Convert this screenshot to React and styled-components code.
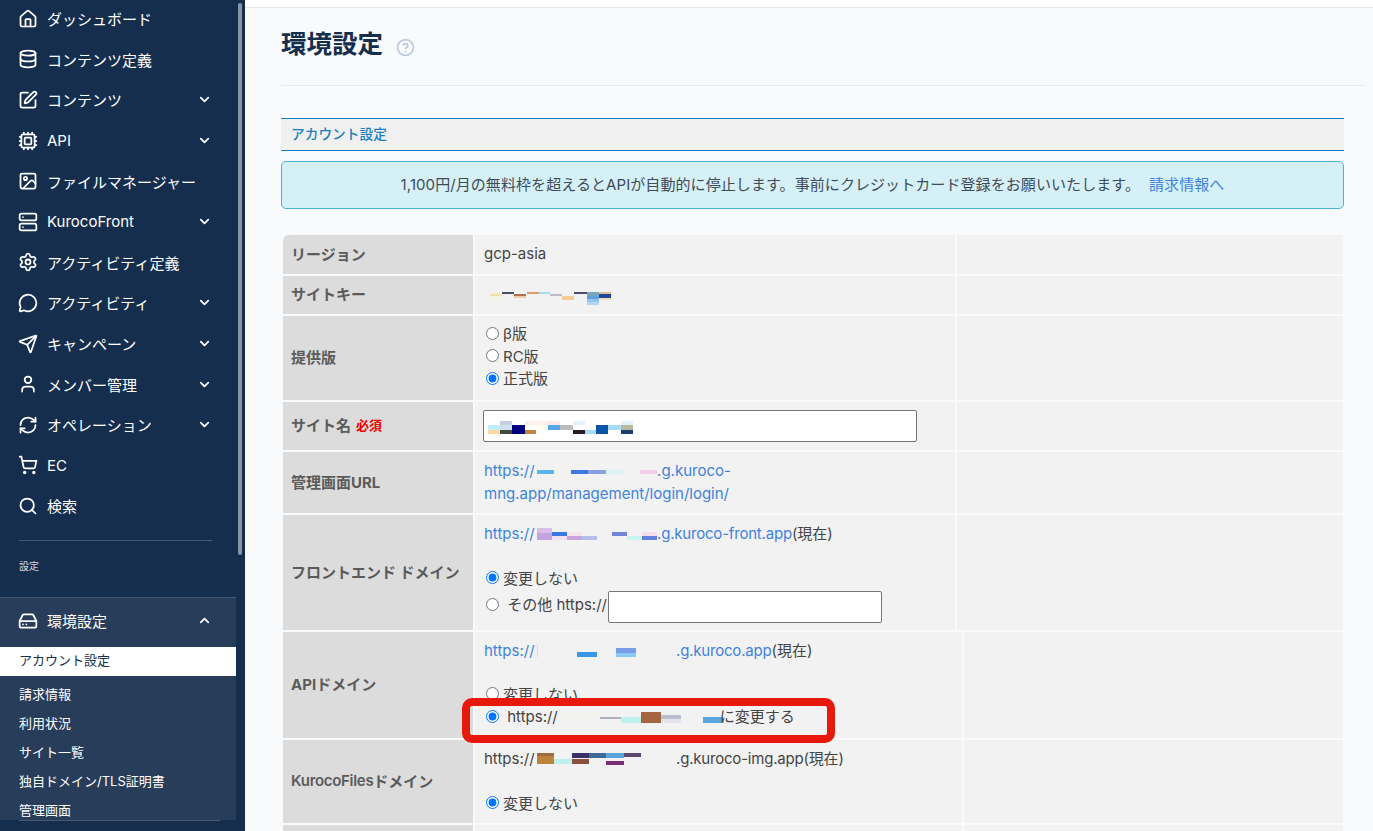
import React from 'react';
import styled, { createGlobalStyle } from 'styled-components';
import {
  House,
  Database,
  SquarePen,
  Cpu,
  Image,
  Server,
  Settings,
  MessageCircle,
  Send,
  User,
  RefreshCw,
  ShoppingCart,
  Search,
  HardDrive,
  ChevronDown,
  ChevronUp,
  CircleHelp,
} from 'lucide-react';

const GlobalStyle = createGlobalStyle`
  html, body {
    margin: 0;
    height: 100%;
    overflow: hidden;
    font-family: Inter, "Noto Sans CJK JP", sans-serif;
    background: #f9fafc;
  }
  * { box-sizing: border-box; }
`;

const Page = styled.div`
  display: flex;
  width: 100%;
  height: 100vh;
  overflow: hidden;
`;

/* sidebar */
const Sidebar = styled.aside`
  position: relative;
  flex: 0 0 245px;
  height: 100%;
  background: #152e4d;
  color: #fff;
  overflow: hidden;
`;

const Scrollbar = styled.div`
  position: absolute;
  top: 3px;
  left: 238px;
  width: 4px;
  height: 552px;
  border-radius: 2px;
  background: #8794a6;
`;

const NavArea = styled.div`
  width: 236px;
  height: 598.5px;
  margin-top: -1.5px;
`;

const NavItem = styled.div`
  display: flex;
  align-items: center;
  height: 40.6px;
  padding: 0 24px 0 18px;
  font-size: 15px;
  gap: 9px;

  & > svg:first-child {
    flex: 0 0 20px;
  }
`;

const NavLabel = styled.span`
  flex: 1;
  white-space: nowrap;
`;

const Divider = styled.div`
  height: 1px;
  margin: 13.5px 24px 0 19px;
  background: #44586f;
`;

const SectionLabel = styled.div`
  margin: 18px 0 0 19px;
  font-size: 10px;
  line-height: 14px;
  color: #d5dae1;
`;

const SubPanel = styled.div`
  width: 236px;
  height: 223px;
  border-top: 1px solid #44586f;
  background: #283d5a;
  overflow: hidden;
`;

const SubHeader = styled(NavItem)`
  height: 49px;
  padding-bottom: 4px;
`;

const SubItem = styled.div`
  height: 29px;
  padding-left: 19px;
  font-size: 13px;
  line-height: 26px;
  white-space: nowrap;
  color: ${({ $active }) => ($active ? '#152e4d' : '#fff')};
  background: ${({ $active }) => ($active ? '#fff' : 'transparent')};
  margin-bottom: ${({ $active }) => ($active ? '5px' : '0')};
`;

const BottomLine = styled.div`
  height: 1px;
  margin: 0 25px 0 19px;
  background: #44586f;
`;

/* main */
const Main = styled.main`
  flex: 1;
  height: 100%;
  min-width: 0;
  overflow: hidden;
`;

const TopStrip = styled.div`
  height: 8px;
  background: #fff;
  border-bottom: 1px solid #e3e8ef;
`;

const Content = styled.div`
  padding: 0 29px 0 36px;
`;

const TitleBar = styled.div`
  display: flex;
  align-items: center;
  gap: 13px;
  height: 78px;
  margin-right: -22px;
  padding-bottom: 5px;
  border-bottom: 1px solid #e7ebf2;
`;

const Title = styled.h1`
  margin: 0 0 5px;
  font-size: 25.5px;
  font-weight: 700;
  color: #152e4d;
`;

const HelpIcon = styled(CircleHelp)`
  margin-top: 7px;
`;

const SectionTitle = styled.h2`
  margin: 32px 0 0;
  height: 33px;
  padding-left: 10px;
  border-top: 1px solid #0e7fc4;
  border-bottom: 1px solid #0e7fc4;
  background: #f0f0f0;
  font-size: 13.7px;
  font-weight: 500;
  line-height: 31px;
  color: #1a7fbe;
`;

const Notice = styled.div`
  display: flex;
  align-items: center;
  justify-content: center;
  gap: 9px;
  height: 48px;
  margin-top: 10px;
  padding-bottom: 3px;
  border: 1px solid #4cb0d5;
  border-radius: 5px;
  background: #d6f0f7;
  font-size: 15px;
  letter-spacing: 0.08px;
  color: #3f4b57;
`;

const Link = styled.a`
  color: #3f82dd;
  text-decoration: none;
`;

const FormTable = styled.div`
  display: flex;
  flex-direction: column;
  gap: 2px;
  margin: 26px 1px 0 2px;
`;

const Row = styled.div`
  position: relative;
  display: grid;
  grid-template-columns: 190px ${({ $wide }) => ($wide ? '487px' : '480px')} 1fr;
  gap: 2px;
  height: ${({ $height }) => $height}px;
`;

const Head = styled.div`
  display: flex;
  align-items: center;
  padding: 0 0 3px 8px;
  background: #dcdcdc;
  font-size: 15px;
  font-weight: 700;
  color: #5b5b5b;
  white-space: nowrap;

  ${Row}:first-child & {
    border-top-left-radius: 6px;
  }
`;

const HeadLatin = styled.span`
  font-weight: 600;
  letter-spacing: -0.3px;
`;

const Required = styled.span`
  margin-left: 5px;
  font-size: 13px;
  color: #ee0000;
`;

const Cell = styled.div`
  padding: ${({ $center }) => ($center ? '0 9px' : '8px 9px 0')};
  display: ${({ $center }) => ($center ? 'flex' : 'block')};
  align-items: center;
  background: #f2f2f2;
  font-size: 15px;
  line-height: 22.5px;
  color: #444;
  overflow: hidden;
`;

const Line = styled.div`
  display: flex;
  align-items: center;
  height: ${({ $height = 22.5 }) => $height}px;
  white-space: nowrap;
  margin-top: ${({ $gap = 0 }) => $gap}px;
`;

const Radio = styled.input.attrs({ type: 'radio', readOnly: true })`
  flex: 0 0 13px;
  width: 13px;
  height: 13px;
  margin: 0 4px 2px 2px;
`;

const TextInput = styled.input.attrs({ type: 'text', readOnly: true })`
  display: block;
  flex: none;
  width: ${({ $width }) => $width}px;
  height: 32px;
  padding: 0;
  margin-top: ${({ $drop = 0 }) => $drop}px;
  margin-left: ${({ $drop = 0 }) => ($drop ? 1 : 0)}px;
  border: 1px solid #767676;
  border-radius: 2px;
  background: #fff;
`;

const InputSlot = styled.div`
  position: relative;
  margin-left: -1px;
`;

const InputMask = styled.svg`
  position: absolute;
  left: 5px;
  top: 11px;
`;

const Mask = styled.svg`
  display: inline-block;
  flex: none;
  vertical-align: middle;
`;

const KeyMask = styled(Mask)`
  margin: 3px 0 0 6px;
`;

const HostMask = styled(Mask)`
  margin-left: 2.5px;
`;

const NextMask = styled(Mask)`
  margin-right: -3px;
`;

const HostLink = styled(Link)`
  letter-spacing: -0.2px;
`;

const HostText = styled.span`
  letter-spacing: -0.2px;
`;

const RedFrame = styled.div`
  position: absolute;
  z-index: 1;
  left: 179px;
  top: 66px;
  width: 373px;
  height: 45px;
  border: 8px solid #e8180c;
  border-radius: 10px;
  pointer-events: none;
`;

/* pixelated parts of the picture that were blurred out */
const Pixels = ({ w, h, cells, as: Comp = Mask }) => (
  <Comp width={w} height={h} viewBox={`0 0 ${w} ${h}`}>
    {cells.map(([x, y, cw, ch, fill], i) => (
      <rect key={i} x={x} y={y} width={cw} height={ch} fill={fill} />
    ))}
  </Comp>
);

const siteKey = [
  [0, 3, 12, 2, '#f9f1dc'], [0, 5, 12, 2, '#f3deb0'], [0, 8, 12, 3, '#f5f0e0'],
  [12, 3, 12, 2, '#4a4d66'], [24, 5, 12, 2, '#b5704a'], [24, 7, 12, 2, '#f0cfa8'],
  [37, 3, 12, 2, '#dd9e6e'], [49, 3, 11, 2, '#a6dcf2'], [49, 5, 11, 2, '#f3f3ee'],
  [60, 5, 12, 2, '#b8bccb'], [72, 7, 12, 4, '#f3cd95'], [84, 3, 13, 2, '#4a4d66'],
  [97, 3, 12, 4, '#79a6bf'], [97, 7, 12, 3, '#5da0dc'], [97, 10, 12, 3, '#92c4ee'],
  [97, 13, 12, 3, '#b3d5f2'], [109, 3, 12, 2, '#dfbd93'], [109, 5, 12, 4, '#1d4a96'],
  [109, 9, 12, 2, '#f3dcc0'],
];

const siteName = [
  [0, 4, 12, 5, '#bfeefe'], [0, 9, 12, 4, '#fdd9a0'],
  [12, 0, 12, 4, '#c5cfdf'], [12, 4, 12, 5, '#cfe2ee'], [12, 9, 12, 4, '#434a3c'],
  [24, 4, 13, 9, '#00007f'],
  [37, 0, 11, 4, '#fdf0ec'], [37, 9, 11, 4, '#c2843c'],
  [48, 0, 12, 4, '#fdf0ec'], [48, 4, 12, 5, '#fffff0'],
  [60, 0, 12, 4, '#fbeaea'], [60, 4, 12, 5, '#55a8ea'],
  [72, 4, 13, 5, '#bdbdbd'],
  [85, 0, 12, 4, '#e6f3ff'], [85, 9, 12, 4, '#2a1a25'],
  [97, 9, 11, 4, '#a4def6'],
  [108, 4, 12, 9, '#0a55a8'],
  [120, 4, 13, 5, '#a4dcfa'],
  [133, 0, 12, 4, '#e6f3fb'], [133, 4, 12, 5, '#b8b8a0'], [133, 9, 12, 4, '#1a3f70'],
];

const adminHost = [
  [0, 0, 17, 4, '#5ab5ec'], [34, 0, 17, 4, '#3d78e0'], [51, 0, 18, 4, '#8aa0e6'],
  [69, 0, 17, 4, '#daf3f3'], [103, 0, 17, 4, '#f5cde6'],
];

const frontHost = [
  [0, 0, 15, 5, '#d9bfe8'], [0, 5, 15, 7, '#c4a4e0'],
  [15, 4, 15, 4, '#3d78e0'], [15, 8, 15, 4, '#f0e0f0'],
  [30, 4, 15, 4, '#f5e6ea'], [30, 8, 15, 4, '#c8a4de'],
  [45, 8, 15, 4, '#b8bce8'], [75, 4, 15, 4, '#7084dc'],
  [90, 8, 15, 4, '#c8f4f2'], [105, 4, 15, 4, '#f5dce8'], [105, 8, 15, 4, '#6480dc'],
];

const apiHost = [
  [0, 0, 1, 12, '#d8d4f2'], [40, 7, 20, 5, '#3a96e6'],
  [79, 3, 20, 5, '#7a9fe8'], [79, 8, 20, 4, '#8ac8f5'],
];

const apiNext = [
  [2, 1, 40, 3, '#f5f2ee'], [42, 5, 21, 2, '#b0b0b8'], [63, 5, 20, 6, '#bef0ee'],
  [83, 0, 20, 11, '#a5653f'], [103, 3, 20, 4, '#b9bfcf'], [103, 7, 20, 4, '#e5e4ee'],
  [145, 5, 20, 6, '#5aa5dc'],
];

const filesHost = [
  [0, 0, 17, 3, '#a06a40'], [0, 3, 17, 8, '#bd833c'], [17, 6, 18, 5, '#bef0ee'],
  [35, 0, 17, 5, '#3a2f66'], [35, 6, 17, 5, '#8a4f40'], [52, 0, 17, 5, '#3d6a94'],
  [69, 0, 18, 5, '#5aa5dc'], [69, 8, 18, 4, '#7a2f78'], [87, 0, 17, 4, '#5a4a70'],
];

const navItems = [
  { icon: House, label: 'ダッシュボード' },
  { icon: Database, label: 'コンテンツ定義' },
  { icon: SquarePen, label: 'コンテンツ', more: true },
  { icon: Cpu, label: 'API', more: true },
  { icon: Image, label: 'ファイルマネージャー' },
  { icon: Server, label: 'KurocoFront', more: true },
  { icon: Settings, label: 'アクティビティ定義' },
  { icon: MessageCircle, label: 'アクティビティ', more: true },
  { icon: Send, label: 'キャンペーン', more: true },
  { icon: User, label: 'メンバー管理', more: true },
  { icon: RefreshCw, label: 'オペレーション', more: true },
  { icon: ShoppingCart, label: 'EC' },
  { icon: Search, label: '検索' },
];

const subItems = ['アカウント設定', '請求情報', '利用状況', 'サイト一覧', '独自ドメイン/TLS証明書', '管理画面'];

const App = () => (
  <Page>
    <GlobalStyle />
    <Sidebar>
      <Scrollbar />
      <NavArea>
        {navItems.map(({ icon: Icon, label, more }) => (
          <NavItem key={label}>
            <Icon size={20} strokeWidth={2.1} />
            <NavLabel>{label}</NavLabel>
            {more && <ChevronDown size={15} strokeWidth={2.8} />}
          </NavItem>
        ))}
        <Divider />
        <SectionLabel>設定</SectionLabel>
      </NavArea>
      <SubPanel>
        <SubHeader>
          <HardDrive size={20} strokeWidth={2.1} />
          <NavLabel>環境設定</NavLabel>
          <ChevronUp size={15} strokeWidth={2.8} />
        </SubHeader>
        {subItems.map((label, i) => (
          <SubItem key={label} $active={i === 0}>{label}</SubItem>
        ))}
      </SubPanel>
      <BottomLine />
    </Sidebar>

    <Main>
      <TopStrip />
      <Content>
        <TitleBar>
          <Title>環境設定</Title>
          <HelpIcon size={19} color="#bcc9de" strokeWidth={2.2} />
        </TitleBar>
        <SectionTitle>アカウント設定</SectionTitle>
        <Notice>
          1,100円/月の無料枠を超えるとAPIが自動的に停止します。事前にクレジットカード登録をお願いいたします。
          <Link>請求情報へ</Link>
        </Notice>

        <FormTable>
          <Row $height={39}>
            <Head>リージョン</Head>
            <Cell $center>gcp-asia</Cell>
            <Cell />
          </Row>
          <Row $height={38}>
            <Head>サイトキー</Head>
            <Cell $center>
              <Pixels as={KeyMask} w={121} h={16} cells={siteKey} />
            </Cell>
            <Cell />
          </Row>
          <Row $height={84}>
            <Head>提供版</Head>
            <Cell>
              <Line $gap={-1}><Radio /><span>β版</span></Line>
              <Line><Radio /><span>RC版</span></Line>
              <Line><Radio checked /><span>正式版</span></Line>
            </Cell>
            <Cell />
          </Row>
          <Row $height={48}>
            <Head>サイト名<Required>必須</Required></Head>
            <Cell>
              <InputSlot>
                <TextInput $width={434} />
                <Pixels as={InputMask} w={145} h={13} cells={siteName} />
              </InputSlot>
            </Cell>
            <Cell />
          </Row>
          <Row $height={61}>
            <Head>管理画面URL</Head>
            <Cell>
              <Link>
                https://<Pixels as={HostMask} w={120} h={4} cells={adminHost} />.g.kuroco-<br />
                mng.app/management/login/login/
              </Link>
            </Cell>
            <Cell />
          </Row>
          <Row $height={115}>
            <Head>フロントエンド ドメイン</Head>
            <Cell>
              <Line>
                <Link>https://</Link>
                <Pixels as={HostMask} w={120} h={12} cells={frontHost} />
                <HostLink>.g.kuroco-front.app</HostLink>(現在)
              </Line>
              <Line $gap={22}><Radio checked /><span>変更しない</span></Line>
              <Line $height={32} $gap={-1}>
                <Radio />
                <span>&nbsp;その他</span>&nbsp;https://
                <TextInput $width={274} $drop={4} />
              </Line>
            </Cell>
            <Cell />
          </Row>
          <Row $height={106} $wide>
            <Head>APIドメイン</Head>
            <Cell>
              <Line>
                <Link>https://</Link>
                <Pixels as={HostMask} w={139} h={12} cells={apiHost} />
                <HostLink>.g.kuroco.app</HostLink>(現在)
              </Line>
              <Line $gap={21}><Radio /><span>変更しない</span></Line>
              <Line>
                <Radio checked />
                <span>&nbsp;https://</span>
                <Pixels as={NextMask} w={165} h={11} cells={apiNext} />
                <span>に変更する</span>
              </Line>
            </Cell>
            <Cell />
            <RedFrame />
          </Row>
          <Row $height={83} $wide>
            <Head><HeadLatin>KurocoFiles</HeadLatin>ドメイン</Head>
            <Cell>
              <Line>
                <span>https://</span>
                <Pixels as={HostMask} w={139} h={12} cells={filesHost} />
                <HostText>.g.kuroco-img.app(現在)</HostText>
              </Line>
              <Line $gap={22}><Radio checked /><span>変更しない</span></Line>
            </Cell>
            <Cell />
          </Row>
          <Row $height={60} $wide>
            <Head />
            <Cell />
            <Cell />
          </Row>
        </FormTable>
      </Content>
    </Main>
  </Page>
);

export default App;
